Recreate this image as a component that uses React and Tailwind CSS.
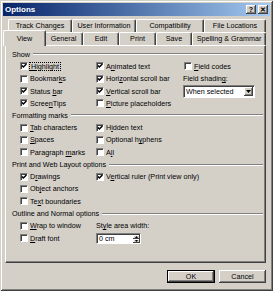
import React from "react";

const ROW = "grid grid-cols-[8px_76px_88px_1fr] h-[12.27px] items-center";

function Check({ checked }) {
  return (
    <span className="relative inline-block w-[8px] h-[8px] shrink-0 bg-white border border-t-[#808080] border-l-[#808080] border-r-white border-b-white shadow-[inset_1px_1px_#404040]">
      {checked && (
        <svg viewBox="0 0 6 6" className="absolute left-0 top-0 w-[6px] h-[6px]">
          <path d="M1 2.5 L2.4 4 L5.4 1" stroke="#000" strokeWidth="1.5" fill="none" />
        </svg>
      )}
    </span>
  );
}

function Item({ checked, children, focus }) {
  return (
    <div className="flex items-center gap-[2px] whitespace-nowrap">
      <Check checked={checked} />
      <span className={focus ? "border border-dotted border-black px-[1px] -ml-[1px]" : ""}>{children}</span>
    </div>
  );
}

function Heading({ children }) {
  return (
    <div className="flex items-center h-[12.27px]">
      <span className="whitespace-nowrap">{children}</span>
      <div className="flex-1 ml-[3px] h-[2px] border-t border-b border-t-[#808080] border-b-white" />
    </div>
  );
}

function Row({ a, b, c }) {
  return (
    <div className={ROW}>
      <div />
      <div>{a}</div>
      <div>{b}</div>
      <div>{c}</div>
    </div>
  );
}

function Tab({ w, children }) {
  return (
    <div
      className={`${w} h-[13px] flex items-center justify-center whitespace-nowrap border-t border-l border-r border-t-white border-l-white border-r-[#404040] shadow-[inset_-1px_0_#808080] rounded-t-[2px] bg-[#d4d0c8]`}
    >
      {children}
    </div>
  );
}

const U = ({ children }) => <u className="underline underline-offset-[1px]">{children}</u>;

export default function App() {
  return (
    <div className="w-[273px] h-[291px] bg-[#d4d0c8] p-[3px] font-['Liberation_Sans',Arial,sans-serif] text-[7.2px] leading-none text-black shadow-[inset_1px_1px_#d4d0c8,inset_-1px_-1px_#404040,inset_2px_2px_#fff,inset_-2px_-2px_#808080]">
      {/* Title bar */}
      <div className="h-[13px] bg-linear-to-r from-[#0a246a] to-[#a6caf0] flex items-center justify-between pl-[2px] pr-[2px]">
        <span className="text-white font-bold text-[8px]">Options</span>
        <div className="flex gap-[1px]">
          <div className="w-[10px] h-[9px] bg-[#d4d0c8] flex items-center justify-center font-bold text-[7px] shadow-[inset_-1px_-1px_#404040,inset_1px_1px_#fff,inset_-2px_-2px_#808080]">?</div>
          <div className="w-[10px] h-[9px] ml-[1px] bg-[#d4d0c8] flex items-center justify-center font-bold text-[7px] shadow-[inset_-1px_-1px_#404040,inset_1px_1px_#fff,inset_-2px_-2px_#808080]">✕</div>
        </div>
      </div>

      {/* Back tab row */}
      <div className="flex mt-[3px] ml-[5px] h-[13px]">
        <Tab w="w-[64px]">Track Changes</Tab>
        <Tab w="w-[64px]">User Information</Tab>
        <Tab w="w-[68px]">Compatibility</Tab>
        <Tab w="w-[62px]">File Locations</Tab>
      </div>

      {/* Front tab row */}
      <div className="flex items-end ml-[2px] h-[13px]">
        <div className="relative z-10 -ml-[2px] -mr-[2px] -mb-[1px] w-[43px] h-[16px] flex items-center justify-center border-t border-l border-r border-t-white border-l-white border-r-[#404040] shadow-[inset_-1px_0_#808080] rounded-t-[2px] bg-[#d4d0c8]">
          View
        </div>
        <Tab w="w-[39px]">General</Tab>
        <Tab w="w-[36px]">Edit</Tab>
        <Tab w="w-[37px]">Print</Tab>
        <Tab w="w-[36px]">Save</Tab>
        <Tab w="w-[74px]">Spelling &amp; Grammar</Tab>
      </div>

      {/* Panel */}
      <div className="ml-[2px] w-[261px] h-[218px] border border-t-white border-l-white border-r-[#404040] border-b-[#404040] shadow-[inset_-1px_-1px_#808080] pl-[6px] pr-[2px] pt-[2px]">
        <Heading>Show</Heading>
        <Row
          a={<Item checked focus><U>H</U>ighlight</Item>}
          b={<Item checked>A<U>n</U>imated text</Item>}
          c={<Item><U>F</U>ield codes</Item>}
        />
        <Row
          a={<Item>Bookmar<U>k</U>s</Item>}
          b={<Item checked>Hori<U>z</U>ontal scroll bar</Item>}
          c={<span className="whitespace-nowrap -ml-[1px]">Field shadin<U>g</U>:</span>}
        />
        <Row
          a={<Item checked>Status <U>b</U>ar</Item>}
          b={<Item checked><U>V</U>ertical scroll bar</Item>}
          c={
            <div className="-ml-[1px] w-[72px] h-[13px] bg-white border border-t-[#808080] border-l-[#808080] border-r-white border-b-white shadow-[inset_1px_1px_#404040] flex items-center">
              <span className="pl-[2px] whitespace-nowrap">When selected</span>
              <div className="ml-auto mr-[1px] mt-[1px] w-[9px] h-[9px] bg-[#d4d0c8] flex items-center justify-center shadow-[inset_-1px_-1px_#404040,inset_1px_1px_#fff,inset_-2px_-2px_#808080]">
                <svg viewBox="0 0 5 3" className="w-[5px] h-[3px]"><path d="M0 0 H5 L2.5 3 Z" fill="#000" /></svg>
              </div>
            </div>
          }
        />
        <Row
          a={<Item checked>Scree<U>n</U>Tips</Item>}
          b={<Item><U>P</U>icture placeholders</Item>}
        />

        <Heading>Formatting marks</Heading>
        <Row a={<Item><U>T</U>ab characters</Item>} b={<Item checked>H<U>i</U>dden text</Item>} />
        <Row a={<Item><U>S</U>paces</Item>} b={<Item>Optional h<U>y</U>phens</Item>} />
        <Row a={<Item>Paragraph <U>m</U>arks</Item>} b={<Item>A<U>l</U>l</Item>} />

        <Heading>Print and Web Layout options</Heading>
        <Row a={<Item checked>D<U>r</U>awings</Item>} b={<Item checked>V<U>e</U>rtical ruler (Print view only)</Item>} />
        <Row a={<Item>Ob<U>j</U>ect anchors</Item>} />
        <Row a={<Item>Te<U>x</U>t boundaries</Item>} />

        <Heading>Outline and Normal options</Heading>
        <Row
          a={<Item><U>W</U>rap to window</Item>}
          b={<span className="whitespace-nowrap">St<U>y</U>le area width:</span>}
        />
        <Row
          a={<Item><U>D</U>raft font</Item>}
          b={
            <div className="w-[45px] h-[11px] bg-white border border-t-[#808080] border-l-[#808080] border-r-white border-b-white shadow-[inset_1px_1px_#404040] flex items-center">
              <span className="pl-[2px]">0 cm</span>
              <div className="ml-auto flex flex-col h-full pt-[1px]">
                <div className="w-[7px] flex-1 bg-[#d4d0c8] flex items-center justify-center shadow-[inset_-1px_-1px_#404040,inset_1px_1px_#fff]">
                  <svg viewBox="0 0 3 2" className="w-[3px] h-[2px]"><path d="M0 2 H3 L1.5 0 Z" fill="#000" /></svg>
                </div>
                <div className="w-[7px] flex-1 bg-[#d4d0c8] flex items-center justify-center shadow-[inset_-1px_-1px_#404040,inset_1px_1px_#fff]">
                  <svg viewBox="0 0 3 2" className="w-[3px] h-[2px]"><path d="M0 0 H3 L1.5 2 Z" fill="#000" /></svg>
                </div>
              </div>
            </div>
          }
        />
      </div>

      {/* Buttons */}
      <div className="ml-[2px] w-[261px] mt-[7px] flex justify-end gap-[4px]">
        <div className="w-[48px] h-[13px] border border-black bg-[#d4d0c8] flex items-center justify-center shadow-[inset_-1px_-1px_#404040,inset_1px_1px_#fff,inset_-2px_-2px_#808080]">
          OK
        </div>
        <div className="w-[47px] h-[13px] bg-[#d4d0c8] flex items-center justify-center shadow-[inset_-1px_-1px_#404040,inset_1px_1px_#fff,inset_-2px_-2px_#808080]">
          Cancel
        </div>
      </div>
    </div>
  );
}
